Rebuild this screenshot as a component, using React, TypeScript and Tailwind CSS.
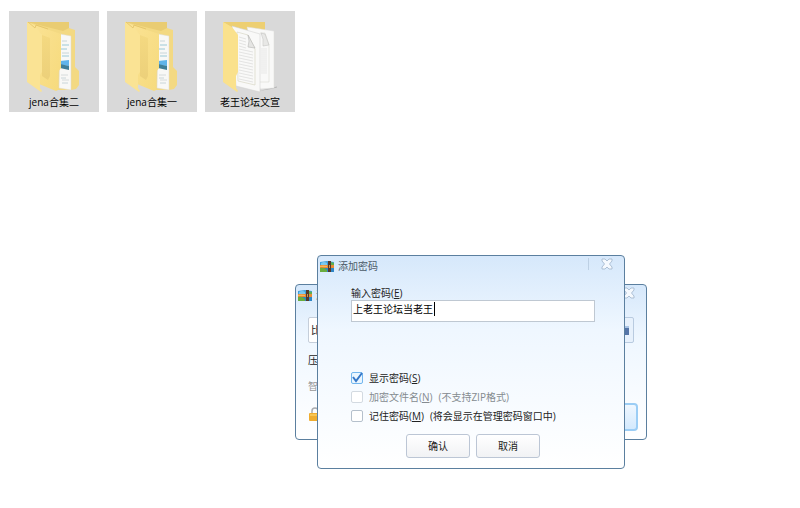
import { useState } from 'react';
import clsx from 'clsx';

const folders = [
  { id: 'jena-2', label: 'jena合集二', kind: 'files' },
  { id: 'jena-1', label: 'jena合集一', kind: 'files' },
  { id: 'forum', label: '老王论坛文宣', kind: 'papers' },
];

function FilesFolder() {
  return (
    <svg viewBox="0 0 54 72" className="h-[72px] w-[54px]" aria-hidden="true">
      <defs>
        <linearGradient id="leaf" x1="0" x2="1" y1="0" y2="1">
          <stop offset="0" stopColor="#fae293" />
          <stop offset="1" stopColor="#f6da7c" />
        </linearGradient>
        <linearGradient id="inner" x1="0" x2="0" y1="0" y2="1">
          <stop offset="0" stopColor="#f4d981" />
          <stop offset="1" stopColor="#ecd07a" />
        </linearGradient>
      </defs>
      <path d="M0 1h42v6l6 2v37l4 4v14l-3 4-5 1H30L8 30z" fill="#f3d982" />
      <path d="M0 1h42v6l-6 3z" fill="#e9cc72" />
      <path d="M33 13l11 2v54l-12-2z" fill="#f8f8f6" stroke="#dedbd0" strokeWidth=".5" />
      <path d="M35 20h5M35 32h7M34 57h5M35 62h6" stroke="#bccbd2" strokeWidth=".8" />
      <path d="M35 24h7M34 28h6M35 35h7" stroke="#92c4d2" strokeWidth=".9" />
      <path d="M34 54h7M35 59h7" stroke="#cdd3d6" strokeWidth=".8" />
      <path d="M33 40l9-1v6l-9-1z" fill="#5fb4ea" />
      <path d="M33 43l9 2v4l-9-2z" fill="#3f7f98" />
      <path d="M7 4l27 9v34l-3 4v18l-2 1-17-7V14z" fill="url(#leaf)" />
      <path d="M15 14l8 3v38l-2 4-6-4z" fill="url(#inner)" />
      <path d="M0 1l8 3 7 10v37l-2 3v13l2 3-1 1L0 61z" fill="#fae394" />
      <path d="M1 1l7 6 1-3 12 4" fill="none" stroke="#e2c167" strokeWidth=".8" />
    </svg>
  );
}

function PapersFolder() {
  return (
    <svg viewBox="0 0 54 72" className="h-[72px] w-[54px]" aria-hidden="true">
      <path d="M0 1h42v10L9 7z" fill="#edcf72" />
      <path d="M36 70l20-5v1l-8 2z" fill="#b4b4b4" />
      <path d="M24 6l27 4v57l-14 1z" fill="#f9f9f8" stroke="#dcdcda" strokeWidth=".5" />
      <path d="M37 12h5l4 12v37h-9" fill="none" stroke="#dadad4" strokeWidth=".6" />
      <path d="M38 12l4 1 4 11-6 1q1-7-2-13z" fill="#e8e8e6" stroke="#bcbcba" strokeWidth=".5" />
      <path
        d="M38 28h6M38 30h6M38 32h6M38 34h6M38 36h6M38 38h6M38 40h6M38 42h6M38 44h6M38 46h6M38 48h6M38 50h6M38 52h6"
        stroke="#dcdcdc"
        strokeWidth=".6"
      />
      <path d="M9 5l28 8v58l-24-6z" fill="#f9f9f8" stroke="#cfcfcc" strokeWidth=".5" />
      <path d="M14 11l11 3 7 14v36l-17-4z" fill="none" stroke="#d8d7c6" strokeWidth=".7" />
      <path d="M25 14l7 13-7-1q2-6 0-12z" fill="#e5e5e3" stroke="#b5b5b3" strokeWidth=".6" />
      <path
        d="M16 16l7 2M16 19l7 2M16 22l7 2M16 25l7 2M16 28l14 3M16 31l14 3M16 34l14 3M16 37l14 3M16 40l14 3M16 43l14 3M16 46l14 3M16 49l14 3M16 52l14 3M16 55l14 3M16 58l14 3"
        stroke="#dadad8"
        strokeWidth=".7"
      />
      <path d="M0 1l9 5 6 8v37l-2 4v12l2 3-1 1L0 61z" fill="#fae18c" />
    </svg>
  );
}

function ArchiveIcon() {
  return (
    <svg viewBox="0 0 14 13" className="h-[13px] w-[14px] shrink-0" aria-hidden="true">
      <path d="M0 2l7-1 7 1v4H0z" fill="#3f9fdc" />
      <path d="M1 3q3-2 6 0v2H1z" fill="#7cc8ee" />
      <path d="M11 2l3 1v3h-3z" fill="#5fae4c" />
      <path d="M0 5h14v3H0z" fill="#e98b34" />
      <path d="M0 6q3-1 7 0v1H0z" fill="#f7b659" />
      <path d="M0 8h14v4H0z" fill="#2e86c6" />
      <path d="M0 8q4-1 7 2v2H0z" fill="#69ac3e" />
      <path d="M8 1h3v11H8z" fill="#54392b" />
      <path d="M9 5h1v3H9z" fill="#c99454" />
    </svg>
  );
}

function CloseIcon() {
  return (
    <svg viewBox="0 0 12 12" className="h-3 w-3" aria-hidden="true">
      <path
        d="M1 1h3l2 2 2-2h3v2L8.500 6 11 9v2H8L6 9l-2 2H1V9l2.500-3L1 3z"
        fill="#f5f9fe"
        stroke="#a7bad0"
        strokeWidth=".9"
      />
    </svg>
  );
}

function LockIcon() {
  return (
    <svg viewBox="0 0 12 14" className="h-[14px] w-3" aria-hidden="true">
      <path d="M4 7V4q0-3 3-3t3 3v3" fill="none" stroke="#a9acb0" strokeWidth="1.500" />
      <rect x="1" y="6" width="11" height="8" rx="1" fill="#efad30" />
      <path d="M2 8h9" stroke="#ffdf78" />
    </svg>
  );
}

function TitleBar({ title }: { title: string }) {
  return (
    <div className="flex h-[22px] items-center gap-1 pb-0.5 pl-0.5 text-[#4b5a68]">
      <ArchiveIcon />
      <h2 className="flex-1">{title}</h2>
      <button
        aria-label="关闭"
        className="mt-0.5 flex h-3 w-9 items-center justify-center self-start border-l border-[#bdd0e4]"
      >
        <CloseIcon />
      </button>
    </div>
  );
}

interface OptionProps {
  label: string;
  hotkey: string;
  note?: string;
  checked: boolean;
  disabled?: boolean;
  onChange?: (checked: boolean) => void;
}

function Option({ label, hotkey, note, checked, disabled, onChange }: OptionProps) {
  return (
    <label className={clsx('flex h-[19px] items-center gap-1.5', disabled && 'text-[#858b90]')}>
      <span className="grid shrink-0">
        <input
          type="checkbox"
          checked={checked}
          disabled={disabled}
          onChange={(e) => onChange?.(e.target.checked)}
          className="col-start-1 row-start-1 h-3 w-3 appearance-none rounded-[2px] border border-[#b5c0cc] bg-white checked:border-[#72b6ee] checked:bg-[#eaf6ff] disabled:border-[#d3dae1]"
        />
        {checked && (
          <svg viewBox="0 0 12 12" className="pointer-events-none col-start-1 row-start-1 h-3 w-3">
            <path d="M2 5l3 4 6-8" fill="none" stroke="#3678c8" strokeWidth="2" />
          </svg>
        )}
      </span>
      <span>
        {label}(<u>{hotkey}</u>)
      </span>
      {note && <span>{note}</span>}
    </label>
  );
}

const windowClass =
  'absolute rounded-[4px] border border-[#5b7f9f] bg-linear-to-b from-[#d6e8fb] via-[#eff7ff] via-35% to-white';
const buttonClass =
  'h-6 w-16 rounded-[3px] border border-[#bcc6d5] bg-linear-to-b from-white to-[#f1f2f4] text-[#222]';

export default function App() {
  const [password, setPassword] = useState('上老王论坛当老王');
  const [showPassword, setShowPassword] = useState(true);
  const [remember, setRemember] = useState(false);

  return (
    <main className="relative min-h-screen overflow-hidden bg-white font-['Open_Sans','Noto_Sans_CJK_SC',sans-serif] text-[10px] leading-[14px] text-[#222]">
      <ul className="flex gap-2 px-[9px] pt-[11px]">
        {folders.map((folder) => (
          <li key={folder.id} className="flex w-[90px] flex-col items-center bg-[#d9d9d9] pt-2.5 pb-[3px]">
            {folder.kind === 'papers' ? <PapersFolder /> : <FilesFolder />}
            <span className="mt-0.5 text-black">{folder.label}</span>
          </li>
        ))}
      </ul>

      {/* Archive window */}
      <section className={clsx(windowClass, 'top-[284px] left-[295px] w-[352px] pb-2')}>
        <TitleBar title="添" />
        <div className="flex flex-col pr-2 pl-3">
          <div className="mt-2.5 mr-1 flex h-[26px]">
            <input
              aria-label="文件名"
              defaultValue="比"
              className="min-w-0 flex-1 rounded-l-[2px] border border-[#c5ceda] bg-white px-0.5"
            />
            <button
              aria-label="浏览"
              className="flex w-7 items-center justify-end rounded-r-[2px] border border-[#b9cbe0] bg-[#e7f1fc] pr-1"
            >
              <svg viewBox="0 0 10 10" className="h-2.5 w-2.5" aria-hidden="true">
                <path d="M0 1h10v9H0z" fill="#5575a8" />
                <path d="M0 1h10v2H0z" fill="#a9c4e5" />
              </svg>
            </button>
          </div>
          <p className="mt-2.5">压</p>
          <p className="mt-3 text-[#999]">智</p>
          <div className="mt-2.5 flex items-start justify-between">
            <button aria-label="密码" className="pt-1">
              <LockIcon />
            </button>
            <button
              aria-label="压缩"
              className="h-7 w-20 rounded-[4px] border-2 border-[#9bcdf5] bg-linear-to-b from-[#eff7ff] to-[#d3e9fd]"
            />
          </div>
        </div>
      </section>

      {/* Password window */}
      <section role="dialog" aria-label="添加密码" className={clsx(windowClass, 'top-[255px] left-[317px] w-[308px]')}>
        <TitleBar title="添加密码" />
        <form className="flex flex-col pt-2 pr-[29px] pb-2.5 pl-[33px]" onSubmit={(e) => e.preventDefault()}>
          <label htmlFor="password">
            输入密码(<u>E</u>)
          </label>
          <div className="relative">
            <input
              id="password"
              type={showPassword ? 'text' : 'password'}
              value={password}
              onChange={(e) => setPassword(e.target.value)}
              className="block h-[22px] w-full border border-[#bfc8d2] bg-white px-px pb-1.5 text-black caret-transparent outline-none"
            />
            <span
              aria-hidden="true"
              className="pointer-events-none absolute top-0.5 h-3.5 w-px bg-black"
              style={{ left: password.length * 10 + 3 }}
            />
          </div>
          <div className="mt-[46px] mb-[9px]">
            <Option label="显示密码" hotkey="S" checked={showPassword} onChange={setShowPassword} />
            <Option label="加密文件名" hotkey="N" note="(不支持ZIP格式)" checked={false} disabled />
            <Option
              label="记住密码"
              hotkey="M"
              note="(将会显示在管理密码窗口中)"
              checked={remember}
              onChange={setRemember}
            />
          </div>
          <div className="flex justify-center gap-1.5">
            <button type="submit" className={buttonClass}>确认</button>
            <button type="button" className={buttonClass}>取消</button>
          </div>
        </form>
      </section>
    </main>
  );
}
